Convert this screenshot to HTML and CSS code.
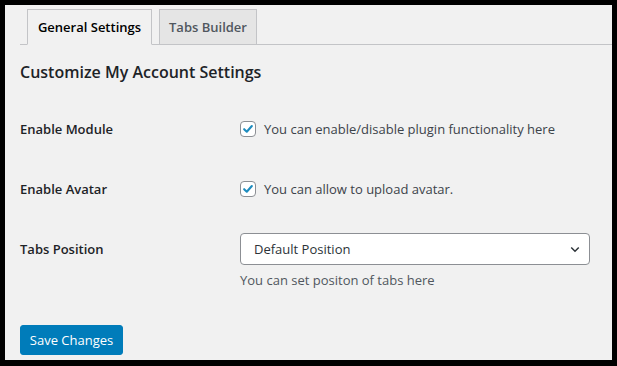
FILE: index.html
```html
<!DOCTYPE html>
<html>
    <head>
        <meta charset="utf-8">
        <link rel="stylesheet" href="styles.css">
        <title>Customize My Account Settings</title>
    </head>
    <body>
        <div class="frame">
            <div class="wrap">

                <nav class="nav-tab-wrapper">
                    <a class="nav-tab nav-tab-active">General Settings</a>
                    <a class="nav-tab">Tabs Builder</a>
                </nav>

                <h2 class="section-title">Customize My Account Settings</h2>

                <div class="form-table">
                    <div class="form-row">
                        <div class="form-label">Enable Module</div>
                        <label class="form-field check-field">
                            <span class="checkbox">
                                <svg viewBox="0 0 16 16" width="16" height="16"><path d="M3.6 8.2 6.6 11.1 12.4 4.6" fill="none" stroke="#1e8cbe" stroke-width="2.4" stroke-linecap="round" stroke-linejoin="round"/></svg>
                            </span>
                            You can enable/disable plugin functionality here
                        </label>
                    </div>

                    <div class="form-row">
                        <div class="form-label">Enable Avatar</div>
                        <label class="form-field check-field">
                            <span class="checkbox">
                                <svg viewBox="0 0 16 16" width="16" height="16"><path d="M3.6 8.2 6.6 11.1 12.4 4.6" fill="none" stroke="#1e8cbe" stroke-width="2.4" stroke-linecap="round" stroke-linejoin="round"/></svg>
                            </span>
                            You can allow to upload avatar.
                        </label>
                    </div>

                    <div class="form-row form-row-select">
                        <div class="form-label">Tabs Position</div>
                        <div class="form-field">
                            <div class="select">
                                <span>Default Position</span>
                                <svg viewBox="0 0 12 8" width="12" height="8"><path d="M1.5 1.5 6 6 10.5 1.5" fill="none" stroke="#2c3338" stroke-width="1.8"/></svg>
                            </div>
                            <p class="description">You can set positon of tabs here</p>
                        </div>
                    </div>
                </div>

                <p class="submit">
                    <button class="button-primary">Save Changes</button>
                </p>

            </div>
        </div>
    </body>
</html>
```

FILE: styles.css
```css
html, body {
    margin: 0;
    padding: 0;
}

body {
    font-family: "Open Sans", "Noto Sans", sans-serif;
    font-size: 13px;
    color: #1d2327;
}

.frame {
    width: 617px;
    height: 366px;
    box-sizing: border-box;
    border: 5px solid #000000;
    border-bottom-width: 6px;
    background: #f1f1f1;
    overflow: hidden;
}

.wrap {
    padding: 4px 0 0 15px;
}

/* tabs */
.nav-tab-wrapper {
    display: flex;
    gap: 7px;
    padding-left: 7px;
    border-bottom: 1px solid #c3c4c7;
}

.nav-tab {
    display: flex;
    align-items: center;
    justify-content: center;
    box-sizing: border-box;
    height: 36px;
    margin-bottom: -1px;
    border: 1px solid #c3c4c7;
    background: #e5e5e5;
    color: #50575e;
    font-size: 13px;
    font-weight: 600;
    white-space: nowrap;
    padding: 0;
}

.nav-tab:first-child {
    width: 125px;
}

.nav-tab:nth-child(2) {
    width: 98px;
}

.nav-tab-active {
    background: #f1f1f1;
    border-bottom-color: #f1f1f1;
    color: #000000;
}

.section-title {
    margin: 15px 0 15px 0;
    font-size: 16px;
    line-height: 24px;
    font-weight: 600;
    color: #1d2327;
}

/* form */
.form-row {
    display: flex;
    align-items: center;
    height: 60px;
}

.form-row-select {
    align-items: flex-start;
    height: auto;
    padding-top: 14px;
}

.form-row-select .form-label {
    line-height: 32px;
}

.form-label {
    width: 220px;
    font-weight: 600;
    font-size: 13px;
    color: #1d2327;
}

.form-field {
    color: #3c434a;
}

.check-field {
    display: flex;
    align-items: center;
    gap: 8px;
}

.checkbox {
    display: flex;
    width: 16px;
    height: 16px;
    box-sizing: border-box;
    border: 1px solid #8c8f94;
    border-radius: 4px;
    background: #ffffff;
    align-items: center;
    justify-content: center;
}

.checkbox svg {
    width: 14px;
    height: 14px;
}

.select {
    display: flex;
    align-items: center;
    justify-content: space-between;
    box-sizing: border-box;
    width: 350px;
    height: 32px;
    padding: 0 9px 0 13px;
    border: 1px solid #8c8f94;
    border-radius: 4px;
    background: #ffffff;
    color: #2c3338;
}

.select svg {
    width: 10px;
    height: 7px;
}

.description {
    margin: 5px 0 0 0;
    line-height: 20px;
    color: #50575e;
}

.submit {
    margin: 35px 0 0 0;
}

.button-primary {
    height: 30px;
    width: 103px;
    padding: 0;
    border: 1px solid #007cba;
    border-radius: 3px;
    background: #007cba;
    color: #ffffff;
    font-family: inherit;
    font-size: 13px;
}
```
